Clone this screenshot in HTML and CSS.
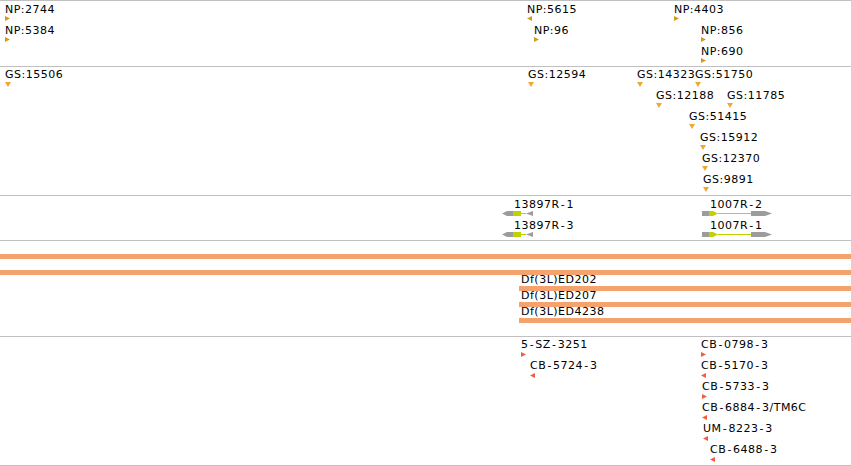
FILE: index.html
```html
<!DOCTYPE html>
<html lang="en">
<head>
    <meta charset="UTF-8">
    <title>Track view</title>
    <link rel="stylesheet" href="styles.css">
</head>
<body>
    <div class="panel">
        <!-- NP insertions -->
        <div class="track track-np">
            <div class="feat" style="left:5px;top:2px"><span class="label">NP:2744</span><svg class="mark" width="6" height="5"><polygon class="np" points="0,0 5,2.5 0,5"/></svg></div>
            <div class="feat" style="left:5px;top:23px"><span class="label">NP:5384</span><svg class="mark" width="6" height="5"><polygon class="np" points="0,0 5,2.5 0,5"/></svg></div>
            <div class="feat" style="left:527px;top:2px"><span class="label">NP:5615</span><svg class="mark" width="6" height="5"><polygon class="np" points="5,0 0,2.5 5,5"/></svg></div>
            <div class="feat" style="left:534px;top:23px"><span class="label">NP:96</span><svg class="mark" width="6" height="5"><polygon class="np" points="0,0 5,2.5 0,5"/></svg></div>
            <div class="feat" style="left:674px;top:2px"><span class="label">NP:4403</span><svg class="mark" width="6" height="5"><polygon class="np" points="0,0 5,2.5 0,5"/></svg></div>
            <div class="feat" style="left:701px;top:23px"><span class="label">NP:856</span><svg class="mark" width="6" height="5"><polygon class="np" points="0,0 5,2.5 0,5"/></svg></div>
            <div class="feat" style="left:701px;top:44px"><span class="label">NP:690</span><svg class="mark" width="6" height="5"><polygon class="np" points="0,0 5,2.5 0,5"/></svg></div>
        </div>

        <!-- GS insertions -->
        <div class="track track-gs">
            <div class="feat gs" style="left:5px;top:1px"><span class="label">GS:15506</span><svg class="mark" width="7" height="5"><polygon points="0,0 6,0 3,5"/></svg></div>
            <div class="feat gs" style="left:528px;top:1px"><span class="label">GS:12594</span><svg class="mark" width="7" height="5"><polygon points="0,0 6,0 3,5"/></svg></div>
            <div class="feat gs" style="left:637px;top:1px"><span class="label">GS:14323</span><svg class="mark" width="7" height="5"><polygon points="0,0 6,0 3,5"/></svg></div>
            <div class="feat gs" style="left:695px;top:1px"><span class="label">GS:51750</span><svg class="mark" width="7" height="5"><polygon points="0,0 6,0 3,5"/></svg></div>
            <div class="feat gs" style="left:656px;top:22px"><span class="label">GS:12188</span><svg class="mark" width="7" height="5"><polygon points="0,0 6,0 3,5"/></svg></div>
            <div class="feat gs" style="left:727px;top:22px"><span class="label">GS:11785</span><svg class="mark" width="7" height="5"><polygon points="0,0 6,0 3,5"/></svg></div>
            <div class="feat gs" style="left:689px;top:43px"><span class="label">GS:51415</span><svg class="mark" width="7" height="5"><polygon points="0,0 6,0 3,5"/></svg></div>
            <div class="feat gs" style="left:700px;top:64px"><span class="label">GS:15912</span><svg class="mark" width="7" height="5"><polygon points="0,0 6,0 3,5"/></svg></div>
            <div class="feat gs" style="left:702px;top:85px"><span class="label">GS:12370</span><svg class="mark" width="7" height="5"><polygon points="0,0 6,0 3,5"/></svg></div>
            <div class="feat gs" style="left:703px;top:106px"><span class="label">GS:9891</span><svg class="mark" width="7" height="5"><polygon points="0,0 6,0 3,5"/></svg></div>
        </div>

        <!-- transcripts -->
        <div class="track track-tx">
            <div class="feat" style="left:502px;top:2px">
                <span class="label tx-label-minus">13897R<span class="dash">-</span>1</span>
                <svg class="mark" width="32" height="5">
                    <polygon class="utr" points="0,2.5 5,0 11,0 11,5 5,5"/>
                    <rect class="cds" x="11" y="0" width="8" height="5"/>
                    <line class="intron" x1="19" y1="2.5" x2="24" y2="2.5"/>
                    <polygon class="utr" points="24,2.5 31,0 31,5"/>
                </svg>
            </div>
            <div class="feat" style="left:502px;top:23px">
                <span class="label tx-label-minus">13897R<span class="dash">-</span>3</span>
                <svg class="mark" width="32" height="5">
                    <polygon class="utr" points="0,2.5 5,0 11,0 11,5 5,5"/>
                    <rect class="cds" x="11" y="0" width="8" height="5"/>
                    <line class="intron" x1="19" y1="2.5" x2="24" y2="2.5"/>
                    <polygon class="utr" points="24,2.5 31,0 31,5"/>
                </svg>
            </div>
            <div class="feat" style="left:702px;top:2px">
                <span class="label tx-label-plus">1007R<span class="dash">-</span>2</span>
                <svg class="mark" width="71" height="5">
                    <rect class="utr" x="0" y="0" width="7" height="5"/>
                    <polygon class="cds" points="7,0 11,0 16,2.5 11,5 7,5"/>
                    <line class="intron" x1="16" y1="2.5" x2="49" y2="2.5"/>
                    <polygon class="utr" points="49,0 63,0 70,2.5 63,5 49,5"/>
                </svg>
            </div>
            <div class="feat" style="left:702px;top:23px">
                <span class="label tx-label-plus">1007R<span class="dash">-</span>1</span>
                <svg class="mark" width="71" height="5">
                    <rect class="utr" x="0" y="0" width="7" height="5"/>
                    <polygon class="cds" points="7,0 11,0 16,2.5 11,5 7,5"/>
                    <line class="intron" x1="16" y1="2.5" x2="49" y2="2.5"/>
                    <polygon class="utr" points="49,0 63,0 70,2.5 63,5 49,5"/>
                </svg>
            </div>
        </div>

        <!-- deficiencies -->
        <div class="track track-df">
            <div class="df-bar" style="left:0;top:13px"></div>
            <div class="df-bar" style="left:0;top:29px"></div>
            <div class="feat df" style="left:519px;top:33px"><span class="label">Df(3L)ED202</span><div class="df-line"></div></div>
            <div class="feat df" style="left:519px;top:49px"><span class="label">Df(3L)ED207</span><div class="df-line"></div></div>
            <div class="feat df" style="left:519px;top:65px"><span class="label">Df(3L)ED4238</span><div class="df-line"></div></div>
        </div>

        <!-- stocks -->
        <div class="track track-cb">
            <div class="feat cb" style="left:521px;top:1px"><span class="label">5<span class="dash">-</span>SZ<span class="dash">-</span>3251</span><svg class="mark" width="6" height="5"><polygon points="0,0 5,2.5 0,5"/></svg></div>
            <div class="feat cb" style="left:530px;top:22px"><span class="label">CB<span class="dash">-</span>5724<span class="dash">-</span>3</span><svg class="mark" width="6" height="5"><polygon points="5,0 0,2.5 5,5"/></svg></div>
            <div class="feat cb" style="left:701px;top:1px"><span class="label">CB<span class="dash">-</span>0798<span class="dash">-</span>3</span><svg class="mark" width="6" height="5"><polygon points="0,0 5,2.5 0,5"/></svg></div>
            <div class="feat cb" style="left:701px;top:22px"><span class="label">CB<span class="dash">-</span>5170<span class="dash">-</span>3</span><svg class="mark" width="6" height="5"><polygon points="5,0 0,2.5 5,5"/></svg></div>
            <div class="feat cb" style="left:702px;top:43px"><span class="label">CB<span class="dash">-</span>5733<span class="dash">-</span>3</span><svg class="mark" width="6" height="5"><polygon points="0,0 5,2.5 0,5"/></svg></div>
            <div class="feat cb" style="left:702px;top:64px"><span class="label">CB<span class="dash">-</span>6884<span class="dash">-</span>3/TM6C</span><svg class="mark" width="6" height="5"><polygon points="5,0 0,2.5 5,5"/></svg></div>
            <div class="feat cb" style="left:703px;top:85px"><span class="label">UM<span class="dash">-</span>8223<span class="dash">-</span>3</span><svg class="mark" width="6" height="5"><polygon points="5,0 0,2.5 5,5"/></svg></div>
            <div class="feat cb" style="left:710px;top:106px"><span class="label">CB<span class="dash">-</span>6488<span class="dash">-</span>3</span><svg class="mark" width="6" height="5"><polygon points="5,0 0,2.5 5,5"/></svg></div>
        </div>
    </div>
</body>
</html>
```

FILE: styles.css
```css
body {
    margin: 0;
    background-color: white;
    font-family: "DejaVu Sans", sans-serif;
    font-size: 11px;
    color: black;
    overflow: hidden;
}
.panel {
    width: 851px;
    border-top: 1px solid #c0c0c0;
}
.track {
    position: relative;
    border-bottom: 1px solid #c0c0c0;
    overflow: hidden;
}
.track-np {
    height: 65px;
}
.track-gs {
    height: 128px;
}
.track-tx {
    height: 44px;
}
.track-df {
    height: 95px;
}
.track-cb {
    height: 128px;
}
.feat {
    position: absolute;
    display: flex;
    flex-direction: column;
    align-items: flex-start;
}
.label {
    display: block;
    line-height: 13px;
    letter-spacing: 0.5px;
    white-space: nowrap;
}
.dash {
    margin: 0 1.2px;
}
.mark {
    display: block;
}
.np {
    fill: #d39b16;
}
.gs .mark {
    margin-top: 1px;
}
.gs polygon {
    fill: #f0a834;
}
.cb .mark {
    margin-top: 1px;
}
.cb polygon {
    fill: #f25c42;
}
.tx-label-minus {
    margin-left: 12px;
}
.tx-label-plus {
    margin-left: 8px;
}
.utr {
    fill: #9c9c9c;
}
.cds {
    fill: #bfd200;
}
.intron {
    stroke: #bfd200;
    stroke-width: 1;
}
.df-bar {
    position: absolute;
    width: 851px;
    height: 5px;
    background-color: #f4a36f;
}
.df {
    right: 0;
}
.df .label {
    line-height: 12px;
    margin-left: 2px;
}
.df-line {
    align-self: stretch;
    height: 5px;
    background-color: #f4a36f;
}
```
